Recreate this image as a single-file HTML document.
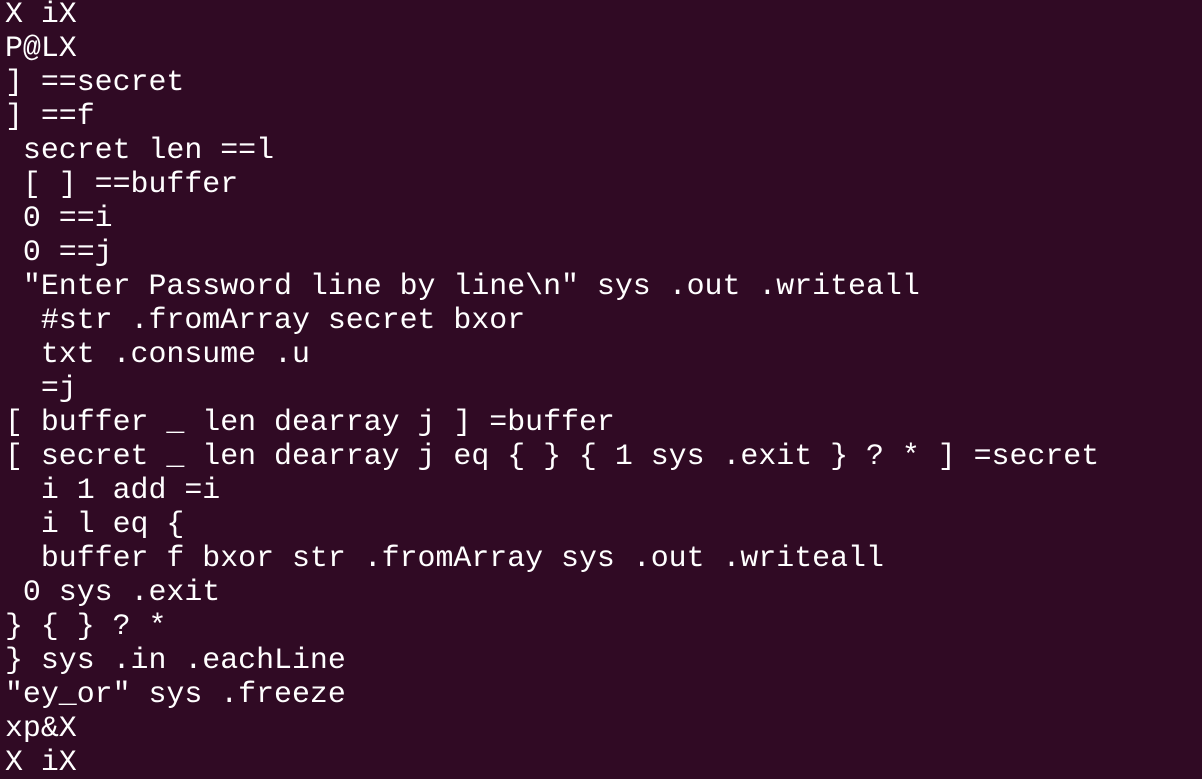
<!DOCTYPE html>
<html><head><style>
html,body{margin:0;padding:0;background:#300a24;width:1202px;height:758px;overflow:hidden}
pre{margin:0;position:absolute;left:5px;top:-3px;font-family:"Liberation Mono",monospace;font-size:29.9px;line-height:34px;color:#ffffff}
</style></head><body><pre>X iX
P@LX
] ==secret
] ==f
 secret len ==l
 [ ] ==buffer
 0 ==i
 0 ==j
 "Enter Password line by line\n" sys .out .writeall
  #str .fromArray secret bxor
  txt .consume .u
  =j
[ buffer _ len dearray j ] =buffer
[ secret _ len dearray j eq { } { 1 sys .exit } ? * ] =secret
  i 1 add =i
  i l eq {
  buffer f bxor str .fromArray sys .out .writeall
 0 sys .exit
} { } ? *
} sys .in .eachLine
"ey_or" sys .freeze
xp&amp;X
X iX</pre></body></html>
